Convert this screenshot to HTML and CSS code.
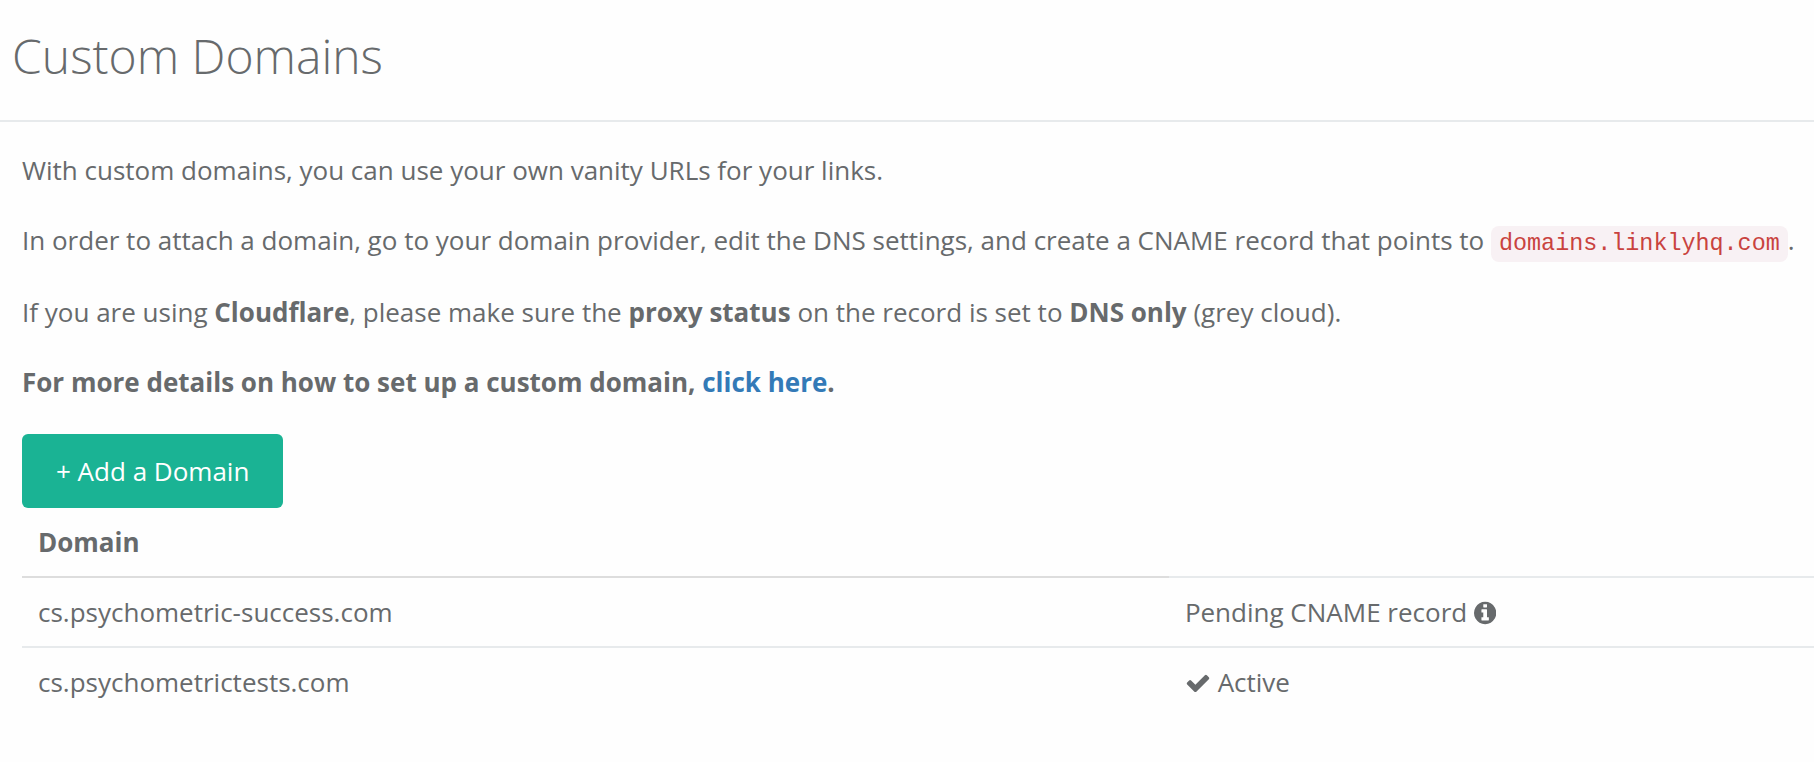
FILE: index.html
```html
<!DOCTYPE html>
<html lang="en">
<head>
<meta charset="utf-8">
<title>Custom Domains</title>
<link rel="stylesheet" href="styles.css">
</head>
<body>
<header class="page-heading">
  <h1 class="page-title">Custom Domains</h1>
</header>
<main class="content">
  <p class="text">With custom domains, you can use your own vanity URLs for your links.</p>
  <p class="text">In order to attach a domain, go to your domain provider, edit the DNS settings, and create a CNAME record that points to <code class="host">domains.linklyhq.com</code>.</p>
  <p class="text">If you are using <strong>Cloudflare</strong>, please make sure the <strong>proxy status</strong> on the record is set to <strong>DNS only</strong> (grey cloud).</p>
  <p class="text"><strong>For more details on how to set up a custom domain, <a class="link" href="#">click here</a>.</strong></p>
  <button class="button" type="button">+ Add a Domain</button>
  <table class="domains">
    <thead>
      <tr><th class="name" scope="col">Domain</th><td></td></tr>
    </thead>
    <tbody>
      <tr>
        <td>cs.psychometric-success.com</td>
        <td>Pending CNAME record <svg class="icon" viewBox="0 0 1536 1792" role="img" aria-label="More information"><path d="M1024 1376v-160q0-14-9-23t-23-9h-96v-512q0-14-9-23t-23-9h-320q-14 0-23 9t-9 23v160q0 14 9 23t23 9h96v320h-96q-14 0-23 9t-9 23v160q0 14 9 23t23 9h448q14 0 23-9t9-23zm-128-896v-160q0-14-9-23t-23-9h-192q-14 0-23 9t-9 23v160q0 14 9 23t23 9h192q14 0 23-9t9-23zm640 416q0 209-103 385.500t-279.500 279.500-385.500 103-385.500-103-279.500-279.500-103-385.500 103-385.500 279.500-279.500 385.500-103 385.500 103 279.500 279.500 103 385.500z"/></svg></td>
      </tr>
      <tr>
        <td>cs.psychometrictests.com</td>
        <td><svg class="icon" viewBox="0 0 1792 1792" aria-hidden="true"><path d="M1671 566q0 40-28 68l-724 724-136 136q-28 28-68 28t-68-28l-136-136-362-362q-28-28-28-68t28-68l136-136q28-28 68-28t68 28l294 295 656-657q28-28 68-28t68 28l136 136q28 28 28 68z"/></svg> Active</td>
      </tr>
    </tbody>
  </table>
</main>
</body>
</html>
```
FILE: styles.css
```css
body {
  margin: 0;
  background: #fefefe;
  color: #676a6c;
  font-family: "Open Sans", sans-serif;
  font-size: 26px;
  line-height: 36px;
}

.page-heading {
  padding: 30px 12px 38px;
  border-bottom: 2px solid #e7eaec;
}

.page-title {
  margin: 0;
  font-size: 48px;
  font-weight: 300;
  line-height: 52px;
}

.content {
  padding: 30px 0 40px 22px;
}

.text {
  margin: 0 0 34px;
}

.host {
  padding: 5px 8px;
  border-radius: 8px;
  background: #f8f1f4;
  color: #c9433f;
  font-family: "Liberation Mono", monospace;
  font-size: 90%;
  line-height: 32px;
}

.link {
  color: #337ab7;
  text-decoration: none;
}

.button {
  display: block;
  padding: 19px 34px;
  border: 0;
  border-radius: 6px;
  background: #1ab394;
  color: #fff;
  font: inherit;
}

.domains {
  width: 100%;
  border-spacing: 0;
}

.domains th,
.domains td {
  padding: 16px;
  border-bottom: 2px solid #e7eaec;
  text-align: left;
}

.domains .name {
  width: 64%;
  box-sizing: border-box;
  border-bottom-color: #ddd;
}

.domains tbody tr:last-child td {
  border-bottom: 0;
}

.icon {
  height: 26px;
  fill: currentColor;
  vertical-align: -4px;
}
```
